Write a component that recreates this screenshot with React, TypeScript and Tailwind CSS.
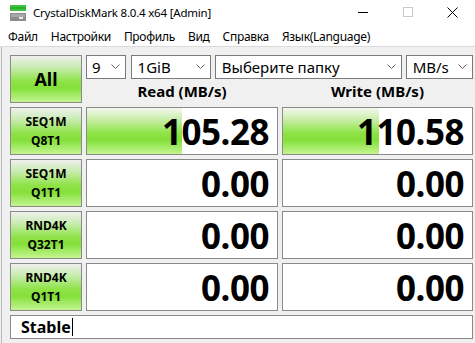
import React from "react";

const btnBg =
  "bg-[linear-gradient(to_bottom,#eef0ee_0%,#c8ecb0_25%,#8ee346_55%,#84e03a_70%,#c4f590_100%)]";
const barBg =
  "bg-[linear-gradient(to_bottom,#f4f8f0_0%,#c8eea8_25%,#8ee346_55%,#84e03a_70%,#c4f590_100%)]";

function Chevron() {
  return (
    <svg width="9" height="6" viewBox="0 0 9 6" className="shrink-0">
      <path d="M0.5 0.5 L4.5 4.5 L8.5 0.5" fill="none" stroke="#606060" strokeWidth="1" />
    </svg>
  );
}

function Select({ w, text, pl = "pl-[5px]" }: { w: string; text: string; pl?: string }) {
  return (
    <div
      className={`${w} h-[24px] bg-white border border-[#7a7a7a] flex items-center justify-between ${pl} pr-[5px] text-[15px] text-black`}
    >
      <span className="leading-none">{text}</span>
      <Chevron />
    </div>
  );
}

function TestBtn({ a, b }: { a: string; b: string }) {
  return (
    <div
      className={`h-[48px] ${btnBg} border border-[#8a8a8a] flex flex-col items-center justify-center text-[12px] font-bold text-black leading-[19px]`}
    >
      <span>{a}</span>
      <span>{b}</span>
    </div>
  );
}

function Cell({ value, pct }: { value: string; pct?: number }) {
  return (
    <div className="relative h-[48px] bg-white border border-[#8a8a8a] overflow-hidden">
      {pct !== undefined && (
        <div className={`absolute left-0 top-0 bottom-0 ${barBg}`} style={{ width: `${pct}%` }} />
      )}
      <div className="relative h-full flex items-center justify-end pr-[8px] text-[35px] font-bold text-black leading-none tracking-[-0.5px]">
        {value}
      </div>
    </div>
  );
}

export default function App() {
  return (
    <div
      className="w-[475px] h-[343px] bg-[#f0f0f0] overflow-hidden flex flex-col"
      style={{ fontFamily: '"Noto Sans", "Open Sans", sans-serif' }}
    >
      {/* title bar */}
      <div className="h-[28px] bg-white flex items-center relative">
        <svg width="16" height="16" viewBox="0 0 16 16" className="ml-[10px] mt-[-3px]">
          <rect x="0" y="0" width="16" height="6" fill="#3cc43c" />
          <rect x="0" y="2" width="16" height="2" fill="#1e9a1e" opacity="0.5" />
          <rect x="0" y="8" width="16" height="8" fill="#8c8c8c" />
          <rect x="1" y="9" width="14" height="3" fill="#a8a8a8" />
          <rect x="9" y="12" width="4" height="2" fill="#e8e8e8" />
        </svg>
        <span className="ml-[7px] text-[11.5px] text-black mt-[-3px] tracking-[-0.2px]">
          CrystalDiskMark 8.0.4 x64 [Admin]
        </span>
        <div className="absolute right-0 top-0 h-full flex items-start">
          <div className="w-[45px] h-[24px] flex items-center justify-center">
            <div className="w-[10px] h-px bg-black" />
          </div>
          <div className="w-[45px] h-[24px] flex items-center justify-center">
            <div className="w-[10px] h-[10px] border border-[#c8c8c8]" />
          </div>
          <div className="w-[45px] h-[24px] flex items-center justify-center">
            <svg width="11" height="11" viewBox="0 0 11 11">
              <path d="M0.5 0.5 L10.5 10.5 M10.5 0.5 L0.5 10.5" stroke="#000" strokeWidth="1" />
            </svg>
          </div>
        </div>
      </div>
      {/* menu */}
      <div className="h-[18px] bg-white flex items-center text-[12px] text-black border-b border-[#dadada] box-content tracking-[-0.3px]">
        <span className="ml-[8px]">Файл</span>
        <span className="ml-[13px]">Настройки</span>
        <span className="ml-[13px]">Профиль</span>
        <span className="ml-[13px]">Вид</span>
        <span className="ml-[13px]">Справка</span>
        <span className="ml-[13px]">Язык(Language)</span>
      </div>
      {/* content */}
      <div className="flex-1 border-l border-[#b8b8b8] ml-[1px] pl-[8px] pt-[8px] pr-[3px]">
        <div className="grid grid-cols-[72px_192px_191px] gap-x-[4px] gap-y-[4px]">
          <div
            className={`h-[48px] ${btnBg} border border-[#8a8a8a] flex items-center justify-center text-[18px] font-bold text-black`}
          >
            All
          </div>
          <div className="col-span-2 h-[48px] flex flex-col">
            <div className="flex">
              <Select w="w-[40px]" text="9" />
              <div className="w-[5px]" />
              <Select w="w-[81px]" text="1GiB" pl="pl-[6px]" />
              <div className="w-[4px]" />
              <Select w="w-[189px]" text="Выберите папку" pl="pl-[6px]" />
              <div className="w-[4px]" />
              <Select w="w-[68px]" text="MB/s" pl="pl-[6px]" />
            </div>
            <div className="flex-1 grid grid-cols-[192px_191px] gap-x-[4px] items-center text-[15px] font-bold text-black">
              <div className="text-center">Read (MB/s)</div>
              <div className="text-center">Write (MB/s)</div>
            </div>
          </div>

          <TestBtn a="SEQ1M" b="Q8T1" />
          <Cell value="105.28" pct={50} />
          <Cell value="110.58" pct={51} />

          <TestBtn a="SEQ1M" b="Q1T1" />
          <Cell value="0.00" />
          <Cell value="0.00" />

          <TestBtn a="RND4K" b="Q32T1" />
          <Cell value="0.00" />
          <Cell value="0.00" />

          <TestBtn a="RND4K" b="Q1T1" />
          <Cell value="0.00" />
          <Cell value="0.00" />

          <div className="col-span-3 h-[24px] bg-white border border-[#8a8a8a] flex items-center pl-[10px] text-[16px] font-bold text-black">
            <span>Stable</span>
            <span className="w-px h-[18px] bg-black ml-[1px]" />
          </div>
        </div>
      </div>
    </div>
  );
}
